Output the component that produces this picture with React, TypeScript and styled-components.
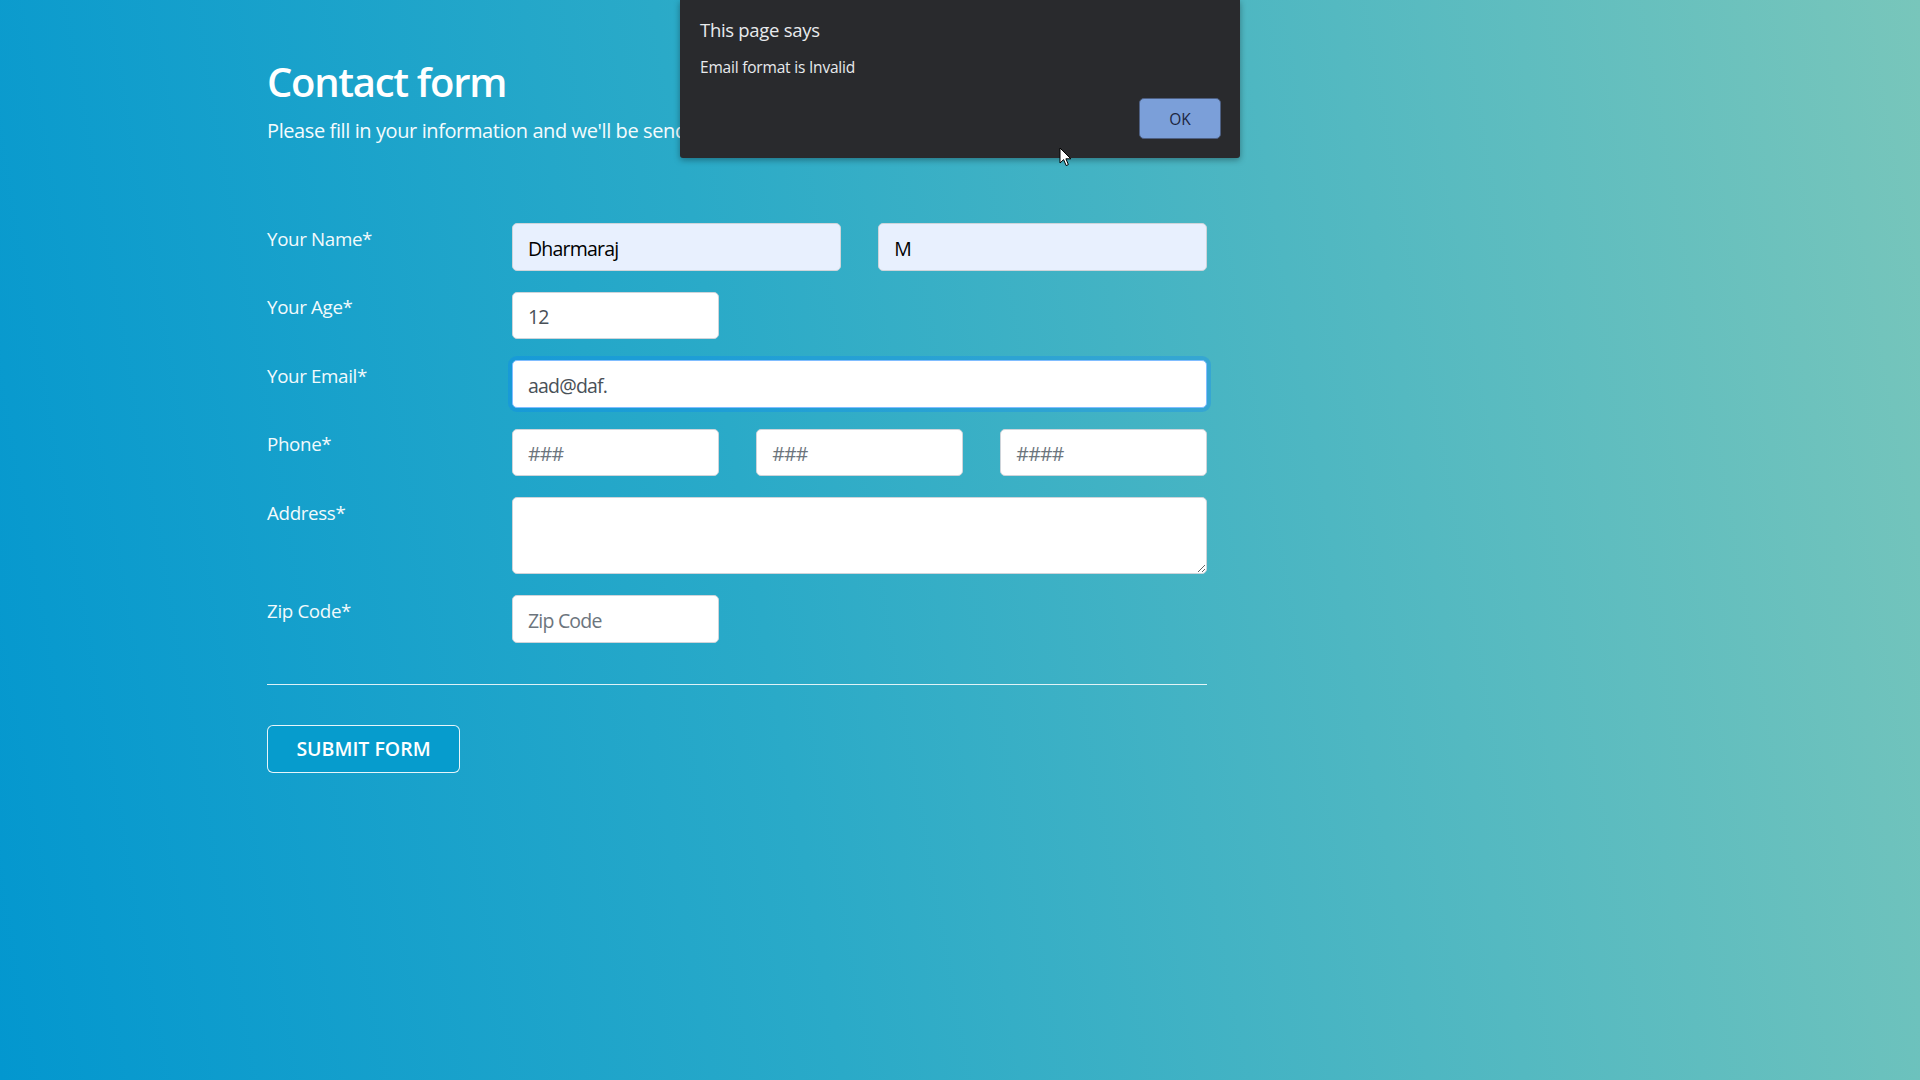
import React from "react";
import styled, { createGlobalStyle, css } from "styled-components";

const GlobalStyle = createGlobalStyle`
  html, body {
    margin: 0;
    padding: 0;
  }
  body {
    font-family: "Open Sans", "Noto Sans", sans-serif;
    overflow: hidden;
  }
  * { box-sizing: border-box; }
`;

const Page = styled.div`
  position: relative;
  width: 100%;
  min-height: 100vh;
  background: linear-gradient(80deg, #0397cf 0%, #2aaac8 40%, #78c6bb 100%);
  color: #ffffff;
`;

const Container = styled.div`
  width: 1386px;
  margin: 0 auto;
  padding-top: 58px;
`;

const Title = styled.h1`
  margin: 0;
  font-size: 40px;
  line-height: 48px;
  font-weight: 600;
  letter-spacing: -1.3px;
  color: #ffffff;
`;

const Subtitle = styled.p`
  margin: 10px 0 0;
  font-size: 20px;
  line-height: 30px;
  letter-spacing: -0.4px;
  color: #f4fbfd;
`;

const Form = styled.form`
  width: 940px;
  margin-top: 77px;
  display: grid;
  grid-template-columns: 245px 695px;
  row-gap: 21px;
`;

const Label = styled.label`
  font-size: 18.75px;
  line-height: 28px;
  padding-top: 1.5px;
  letter-spacing: -0.35px;
  color: #f2fafc;
`;

const Group = styled.div<{ $cols: number }>`
  display: grid;
  grid-template-columns: repeat(${(p) => p.$cols}, 1fr);
  column-gap: 37.5px;
`;

const fieldBase = css`
  display: block;
  width: 100%;
  font-family: "Open Sans", "Noto Sans", sans-serif;
  font-size: 19.5px;
  letter-spacing: -0.8px;
  color: #495057;
  background: #ffffff;
  border: 1px solid #ced4da;
  border-radius: 5px;
  padding: 3px 15px 0;
  outline: none;
  &::placeholder {
    color: #6c757d;
    opacity: 1;
  }
`;

const Input = styled.input<{ $autofill?: boolean; $focused?: boolean }>`
  ${fieldBase};
  height: 47.5px;
  ${(p) =>
    p.$autofill &&
    css`
      background: #e8f0fe;
      color: #000000;
    `}
  ${(p) =>
    p.$focused &&
    css`
      border-color: #80bdff;
      box-shadow: 0 0 0 4px rgba(0, 123, 255, 0.25);
    `}
`;

const TextArea = styled.textarea`
  ${fieldBase};
  height: 77px;
  padding: 8px 15px;
  resize: vertical;
`;

const Divider = styled.hr`
  width: 940px;
  margin: 41px 0 40px;
  border: 0;
  border-top: 1px solid rgba(255, 255, 255, 0.85);
`;

const SubmitButton = styled.button`
  width: 193px;
  height: 48px;
  font-family: "Open Sans", "Noto Sans", sans-serif;
  font-size: 19.5px;
  font-weight: 600;
  letter-spacing: 0;
  color: #ffffff;
  background: #069ccd;
  border: 1px solid rgba(255, 255, 255, 0.9);
  border-radius: 6px;
  cursor: pointer;
`;

const Dialog = styled.div`
  position: absolute;
  left: 680px;
  top: 0;
  width: 560px;
  height: 158px;
  background: #292a2d;
  border-radius: 0 0 3px 3px;
  box-shadow: 0 2px 6px rgba(0, 0, 0, 0.35);
  padding: 17px 19px 19px 20px;
  display: flex;
  flex-direction: column;
`;

const DialogTitle = styled.div`
  font-size: 18.5px;
  line-height: 26px;
  letter-spacing: -0.3px;
  color: #e8eaed;
`;

const DialogMessage = styled.div`
  margin-top: 13px;
  font-size: 15.5px;
  line-height: 22px;
  letter-spacing: -0.2px;
  color: #e8eaed;
`;

const DialogActions = styled.div`
  margin-top: auto;
  display: flex;
  justify-content: flex-end;
`;

const OkButton = styled.button`
  width: 82px;
  height: 41px;
  font-family: "Open Sans", "Noto Sans", sans-serif;
  font-size: 15.5px;
  color: #1b2540;
  background: #7b9fd9;
  border: 1px solid #4d5f82;
  border-radius: 5px;
`;

const Cursor = styled.svg`
  position: absolute;
  left: 1059px;
  top: 147px;
`;

export default function App() {
  return (
    <Page>
      <GlobalStyle />
      <Container>
        <Title>Contact form</Title>
        <Subtitle>
          Please fill in your information and we'll be sending your order in no time.
        </Subtitle>
        <Form onSubmit={(e) => e.preventDefault()}>
          <Label>Your Name*</Label>
          <Group $cols={2}>
            <Input $autofill defaultValue="Dharmaraj" />
            <Input $autofill defaultValue="M" />
          </Group>

          <Label>Your Age*</Label>
          <Group $cols={3}>
            <Input defaultValue="12" />
          </Group>

          <Label>Your Email*</Label>
          <Group $cols={1}>
            <Input $focused defaultValue="aad@daf." />
          </Group>

          <Label>Phone*</Label>
          <Group $cols={3}>
            <Input placeholder="###" />
            <Input placeholder="###" />
            <Input placeholder="####" />
          </Group>

          <Label>Address*</Label>
          <Group $cols={1}>
            <TextArea />
          </Group>

          <Label>Zip Code*</Label>
          <Group $cols={3}>
            <Input placeholder="Zip Code" />
          </Group>
        </Form>
        <Divider />
        <SubmitButton type="button">SUBMIT FORM</SubmitButton>
      </Container>

      <Dialog>
        <DialogTitle>This page says</DialogTitle>
        <DialogMessage>Email format is Invalid</DialogMessage>
        <DialogActions>
          <OkButton type="button">OK</OkButton>
        </DialogActions>
      </Dialog>

      <Cursor width="13" height="20" viewBox="0 0 13 20">
        <path
          d="M1 1 L1 16 L4.6 12.6 L7.2 18.6 L9.4 17.6 L6.9 11.8 L11.8 11.8 Z"
          fill="#ffffff"
          stroke="#000000"
          strokeWidth="1"
          strokeLinejoin="round"
        />
      </Cursor>
    </Page>
  );
}
